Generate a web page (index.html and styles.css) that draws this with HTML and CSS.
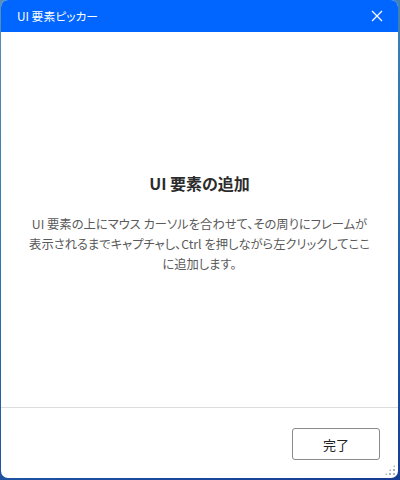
FILE: index.html
```html
<!DOCTYPE html>
<html lang="ja">
<head>
<meta charset="utf-8">
<link rel="stylesheet" href="styles.css">
</head>
<body>
<div class="window">
  <div class="titlebar">
    <span class="title">UI 要素ピッカー</span>
    <svg class="close" width="12" height="12" viewBox="0 0 12 12"><path d="M1 1L11 11M11 1L1 11" stroke="#fff" stroke-width="1.3" fill="none"/></svg>
  </div>
  <div class="content">
    <h1 class="heading">UI 要素の追加</h1>
    <p class="desc">UI 要素の上にマウス カーソルを合わせて、その周りにフレームが<br>表示されるまでキャプチャし、Ctrl を押しながら左クリックしてここ<br>に追加します。</p>
  </div>
  <div class="footer">
    <button class="btn">完了</button>
    <div class="grip"></div>
  </div>
</div>
</body>
</html>
```
FILE: styles.css
```css
html, body {
  margin: 0;
  padding: 0;
}
body {
  width: 400px;
  height: 480px;
  background: linear-gradient(160deg, #5a8fb8 0%, #2f78b0 40%, #1c4fa0 80%, #163c92 100%);
  font-family: "Noto Sans CJK JP", "Noto Sans", sans-serif;
  font-feature-settings: "palt";
  overflow: hidden;
}
.window {
  margin-left: 1px;
  width: 397px;
  height: 478px;
  background: #fff;
  border-radius: 7px;
  overflow: hidden;
  display: flex;
  flex-direction: column;
}
.titlebar {
  height: 32px;
  flex: none;
  background: #0066ff;
  display: flex;
  align-items: center;
  justify-content: space-between;
  padding: 0 15px 0 16px;
}
.title {
  color: #fff;
  font-size: 11.8px;
  line-height: 16px;
}
.close {
  display: block;
}
.content {
  flex: 1;
  display: flex;
  flex-direction: column;
  align-items: center;
  padding-top: 140px;
  border-bottom: 1px solid #dcdcdc;
}
.heading {
  margin: 0;
  font-size: 16px;
  line-height: 22px;
  font-weight: bold;
  color: #2b2b2b;
}
.desc {
  margin: 20px 0 0;
  font-size: 12.3px;
  line-height: 20px;
  color: #5a5a5a;
  text-align: center;
}
.footer {
  height: 70px;
  flex: none;
  display: flex;
  justify-content: flex-end;
  align-items: flex-start;
  padding: 20px 18px 0 0;
  box-sizing: border-box;
  position: relative;
}
.btn {
  width: 88px;
  height: 32px;
  border: 1px solid #8a8a8a;
  border-radius: 3px;
  background: #fff;
  font-family: inherit;
  font-size: 13px;
  color: #222;
  padding: 0;
}
.grip {
  position: absolute;
  right: 2px;
  bottom: 2px;
  width: 12px;
  height: 12px;
  background-image: radial-gradient(circle, #a8b4c8 0.9px, transparent 1.1px);
  background-size: 4px 4px;
  clip-path: polygon(100% 0, 100% 100%, 0 100%);
}
```
